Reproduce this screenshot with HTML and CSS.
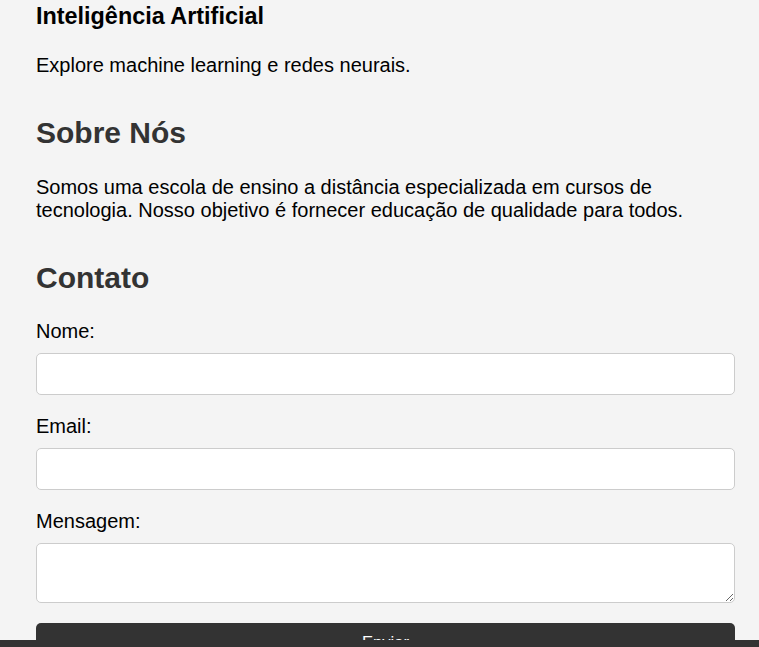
FILE: index.html
```html
<!DOCTYPE html>
<html lang="pt-BR">
<head>
<meta charset="utf-8">
<title>Escola de Tecnologia</title>
<link rel="stylesheet" href="styles.css">
</head>
<body>
<main class="page">
  <article class="course">
    <h3>Inteligência Artificial</h3>
    <p>Explore machine learning e redes neurais.</p>
  </article>
  <section class="about">
    <h2>Sobre Nós</h2>
    <p>Somos uma escola de ensino a distância especializada em cursos de tecnologia. Nosso objetivo é fornecer educação de qualidade para todos.</p>
  </section>
  <section class="contact">
    <h2>Contato</h2>
    <form class="form">
      <label for="nome">Nome:</label>
      <input id="nome" type="text" class="field">
      <label for="email">Email:</label>
      <input id="email" type="email" class="field">
      <label for="msg">Mensagem:</label>
      <textarea id="msg" class="field area"></textarea>
      <button type="submit" class="send">Enviar</button>
    </form>
  </section>
</main>
<footer class="footer"></footer>
</body>
</html>
```
FILE: styles.css
```css
html, body {
  margin: 0;
  background: #f4f4f4;
}
body {
  font-family: "Liberation Sans", Arial, sans-serif;
  font-size: 20px;
  color: #000;
}
.page {
  padding: 3px 24px 80px 36px;
}
.course h3 {
  margin: 0 0 24px;
  font-size: 23.4px;
  font-weight: bold;
  line-height: normal;
}
.course p,
.about p {
  margin: 0;
  line-height: 23px;
}
.about,
.contact {
  margin-top: 39px;
}
.about h2,
.contact h2 {
  margin: 0 0 25px;
  font-size: 30px;
  line-height: 34.5px;
  color: #333;
}
.form {
  display: flex;
  flex-direction: column;
}
.form label {
  display: block;
  line-height: 23px;
  margin-bottom: 10px;
}
.field {
  display: block;
  box-sizing: border-box;
  width: 100%;
  height: 42px;
  margin: 0 0 20px;
  padding: 10px;
  border: 1px solid #ccc;
  border-radius: 5px;
  background: #fff;
  font: inherit;
}
.area {
  height: 60px;
  resize: both;
}
.send {
  display: block;
  width: 100%;
  padding: 10px;
  border: none;
  border-radius: 5px;
  background: #333;
  color: #fff;
  font-family: "Liberation Sans", Arial, sans-serif;
  font-size: 16.67px;
  line-height: normal;
}
.footer {
  position: fixed;
  left: 0;
  right: 0;
  bottom: 0;
  height: 7px;
  background: #333;
}
```
